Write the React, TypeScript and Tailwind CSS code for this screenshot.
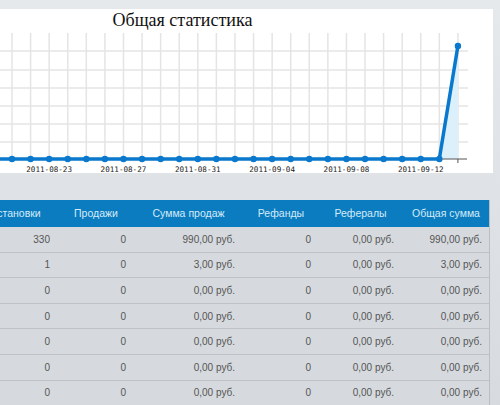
import React from "react";

const N = 25;
const X0 = 12;
const STEP = 18.58;
const BASE = 129;

function Chart() {
  const xs = Array.from({ length: N }, (_, i) => X0 + STEP * i);
  const hLines = [21, 40, 58, 76, 94, 112];
  const labels = [
    { i: 2, t: "2011-08-23" },
    { i: 6, t: "2011-08-27" },
    { i: 10, t: "2011-08-31" },
    { i: 14, t: "2011-09-04" },
    { i: 18, t: "2011-09-08" },
    { i: 22, t: "2011-09-12" },
  ];
  const pts = xs.map((x, i) => [x, i === N - 1 ? 16 : BASE] as [number, number]);
  const d = "M0 " + BASE + " " + pts.map((p) => `L${p[0].toFixed(1)} ${p[1]}`).join(" ");
  const last = pts[N - 1];
  const prev = pts[N - 2];
  return (
    <svg width="493" height="143" viewBox="0 0 493 143" className="block">
      {hLines.map((y) => (
        <line key={y} x1="0" x2="468" y1={y} y2={y} stroke="#e4e4e4" strokeWidth="1.5" />
      ))}
      {xs.map((x, i) => (
        <line key={i} x1={x} x2={x} y1="3" y2={BASE} stroke="#e4e4e4" strokeWidth="1.5" />
      ))}
      <polygon
        points={`${prev[0]},${BASE} ${last[0]},${last[1]} ${last[0]},${BASE}`}
        fill="#dcf0fb"
      />
      <line x1="0" x2="467" y1={BASE} y2={BASE} stroke="#555" strokeWidth="1" />
      <line x1={last[0]} x2={last[0]} y1={BASE} y2={BASE + 4} stroke="#555" strokeWidth="1" />
      <path d={d} fill="none" stroke="#0a78cc" strokeWidth="3.5" strokeLinejoin="round" />
      {pts.map((p, i) => (
        <circle key={i} cx={p[0]} cy={p[1]} r="3.2" fill="#0a78cc" />
      ))}
      {labels.map((l) => (
        <text
          key={l.t}
          x={xs[l.i]}
          y="141.5"
          textAnchor="middle"
          fontSize="7.6"
          fill="#222"
          fontFamily="'DejaVu Sans Mono', 'Liberation Mono', monospace"
        >
          {l.t}
        </text>
      ))}
    </svg>
  );
}

const rows = [
  ["330", "0", "990,00 руб.", "0", "0,00 руб.", "990,00 руб."],
  ["1", "0", "3,00 руб.", "0", "0,00 руб.", "3,00 руб."],
  ["0", "0", "0,00 руб.", "0", "0,00 руб.", "0,00 руб."],
  ["0", "0", "0,00 руб.", "0", "0,00 руб.", "0,00 руб."],
  ["0", "0", "0,00 руб.", "0", "0,00 руб.", "0,00 руб."],
  ["0", "0", "0,00 руб.", "0", "0,00 руб.", "0,00 руб."],
  ["0", "0", "0,00 руб.", "0", "0,00 руб.", "0,00 руб."],
];

const heads = ["Установки", "Продажи", "Сумма продаж", "Рефанды", "Рефералы", "Общая сумма"];
const cols = "grid grid-cols-[84px_76px_109px_76px_83px_88px]";

export default function App() {
  return (
    <div
      className="w-[500px] h-[405px] overflow-hidden bg-gradient-to-b from-[#e6e9ec] to-[#d7dbdf]"
      style={{ fontFamily: "'Liberation Sans', Arial, sans-serif" }}
    >
      <div className="pt-[9px]">
        <div className="w-[493px] h-[164px] bg-white">
          <div
            className="h-[21px] pt-[1px] text-center text-[18px] leading-[20px] text-[#111] pr-[128px]"
            style={{ fontFamily: "'Liberation Serif', 'Times New Roman', serif" }}
          >
            Общая статистика
          </div>
          <Chart />
        </div>
      </div>
      <div className="mt-[27px] ml-[-26px] w-[516px] border-r border-[#b9bfc5]">
        <div className={`${cols} h-[27px] bg-[#0b7cc0] text-[#d4ebf8] text-[10.5px] items-center`}>
          {heads.map((h) => (
            <div key={h} className="text-center whitespace-nowrap">
              {h}
            </div>
          ))}
        </div>
        {rows.map((r, ri) => (
          <div
            key={ri}
            className={`${cols} h-[25.6px] bg-[#d6dade] border-b border-[#bcc2c8] text-[10px] text-[#555] items-center`}
          >
            {r.map((c, ci) => (
              <div key={ci} className="text-right pr-[8px] whitespace-nowrap">
                {c}
              </div>
            ))}
          </div>
        ))}
      </div>
    </div>
  );
}
